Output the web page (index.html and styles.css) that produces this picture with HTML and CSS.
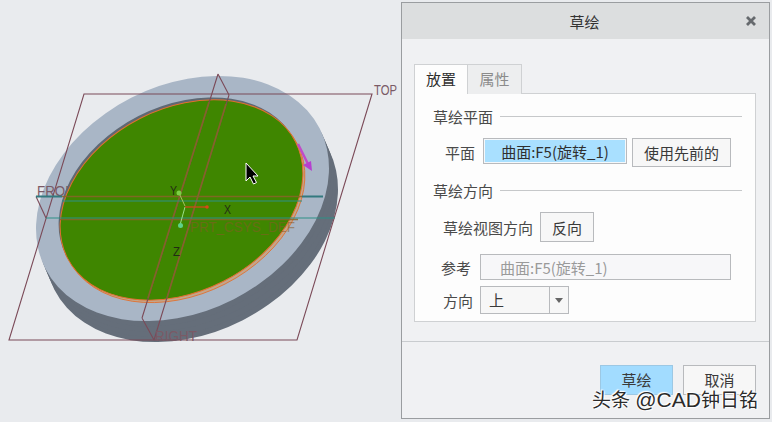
FILE: index.html
```html
<!DOCTYPE html>
<html lang="zh">
<head>
<meta charset="utf-8">
<title>草绘</title>
<link rel="stylesheet" href="styles.css">
</head>
<body>
<main class="screen">
  <svg class="viewport" width="400" height="422" viewBox="0 0 400 422">
    <defs>
      <ellipse id="disc" cx="182.500" cy="198.500" rx="154" ry="113" transform="rotate(-27 182.500 198.500)"/>
      <ellipse id="top-face" cx="181.500" cy="200" rx="128" ry="91.500" transform="rotate(-27 181.500 200)"/>
    </defs>
    <g class="part">
      <use href="#disc" class="side" transform="translate(9 21)"/>
      <use href="#disc" class="side" transform="translate(6.750 15.750)"/>
      <use href="#disc" class="side" transform="translate(4.500 10.500)"/>
      <use href="#disc" class="side" transform="translate(2.250 5.250)"/>
      <use href="#disc" class="ring"/>
    </g>
    <text class="label" x="37" y="196" textLength="46" lengthAdjust="spacingAndGlyphs">FRONT</text>
    <g class="part">
      <use href="#top-face" class="recess" transform="translate(-1.500 -2.500)"/>
      <use href="#top-face" class="lip" transform="translate(2 2.500)"/>
      <use href="#top-face" class="face"/>
    </g>
    <g class="datum">
      <path d="M84 94H372L297 340H9Z"/>
      <path d="M218 74L142 318M229 95L154 340M218 74L229 95M142 318L154 340"/>
      <path d="M36 196.500L46 218"/>
    </g>
    <g class="on-face">
      <path d="M209 102L148 298M226 104L167 298M62 196.500H302M60 219.500H298"/>
    </g>
    <g class="teal">
      <path class="thin" d="M62 201H302M46 218H335"/>
      <path d="M36 196.500H62M302 196.500H323"/>
    </g>
    <path class="arrow-line" d="M298 144L309 166"/>
    <path class="arrow-head" d="M303 165L311 161L312 171Z"/>
    <g class="csys">
      <path class="axis-y" d="M185 206L179 193"/>
      <path class="axis-z" d="M185 207L180 225"/>
      <path class="axis-x" d="M185 207H207"/>
      <circle class="dot-y" cx="179" cy="193" r="2.500"/>
      <circle class="dot-z" cx="180.500" cy="225.500" r="2.500"/>
      <circle class="dot-x" cx="207" cy="207" r="1.800"/>
    </g>
    <text class="label" x="374" y="95" textLength="23" lengthAdjust="spacingAndGlyphs">TOP</text>
    <text class="label" x="155" y="341" textLength="42" lengthAdjust="spacingAndGlyphs">RIGHT</text>
    <text class="label faint" x="190" y="232" textLength="105" lengthAdjust="spacingAndGlyphs">PRT_CSYS_DEF</text>
    <text class="axis-label" x="170" y="195" textLength="7" lengthAdjust="spacingAndGlyphs">Y</text>
    <text class="axis-label" x="224" y="214" textLength="7" lengthAdjust="spacingAndGlyphs">X</text>
    <text class="axis-label" x="173" y="256" textLength="7" lengthAdjust="spacingAndGlyphs">Z</text>
    <path class="cursor" d="M246 163V181L250 177L253.500 184L256.500 182.500L253 176H258Z"/>
  </svg>

  <section class="dialog">
    <header class="titlebar">
      <h1 class="title">草绘</h1>
      <svg class="close" width="10" height="10" viewBox="0 0 10 10"><path d="M1 1L9 9M9 1L1 9"/></svg>
    </header>
    <div class="body">
      <div class="tabs">
        <div class="tab active">放置</div>
        <div class="tab">属性</div>
      </div>
      <div class="panel">
        <div class="legend"><span>草绘平面</span><i class="rule"></i></div>
        <div class="row row-plane">
          <span class="lbl">平面</span>
          <div class="field selected">曲面:F5(旋转_1)</div>
          <button class="btn btn-prev">使用先前的</button>
        </div>
        <div class="legend legend-dir"><span>草绘方向</span><i class="rule"></i></div>
        <div class="row row-view">
          <span class="lbl">草绘视图方向</span>
          <button class="btn btn-flip">反向</button>
        </div>
        <div class="row row-ref">
          <span class="lbl">参考</span>
          <div class="field disabled">曲面:F5(旋转_1)</div>
        </div>
        <div class="row row-orient">
          <span class="lbl">方向</span>
          <div class="select"><span class="value">上</span><span class="drop"><b class="caret"></b></span></div>
        </div>
      </div>
    </div>
    <footer class="footer">
      <button class="btn action primary">草绘</button>
      <button class="btn action">取消</button>
    </footer>
  </section>
  <div class="watermark">头条 <span class="wm-latin">@CAD</span>钟日铭</div>
</main>
</body>
</html>
```

FILE: styles.css
```css
* { box-sizing: border-box; }
html, body { margin: 0; padding: 0; }
body {
  width: 772px;
  height: 422px;
  overflow: hidden;
  background: #e9ebee;
  font-family: "Noto Sans CJK SC", "Liberation Sans", sans-serif;
  font-size: 15px;
  color: #3c3c3c;
}
.screen { position: relative; display: flex; width: 772px; height: 422px; }
.viewport { flex: none; display: block; width: 400px; height: 422px; overflow: visible; }

.side { fill: #656e7a; }
.ring { fill: #a9b6c6; }
.recess { fill: #5e6874; }
.lip { fill: #c4a58a; stroke: #e2702e; stroke-width: .8; }
.face { fill: #3f8600; stroke: #e2702e; stroke-width: 1; }
.datum path { fill: none; stroke: #7b4a58; stroke-width: 1.100; }
.on-face path { fill: none; stroke: #8a6428; stroke-width: 1.700; opacity: .85; }
.teal path { fill: none; stroke: #33797e; stroke-width: 1.800; }
.teal .thin { stroke: #2f8f86; stroke-width: 1.100; }
.arrow-line { stroke: #c14bc8; stroke-width: 2.500; fill: none; }
.arrow-head { fill: #b63fd0; }
.axis-y { stroke: #a6c060; fill: none; }
.axis-z { stroke: #9be08a; fill: none; }
.axis-x { stroke: #d8481a; stroke-width: 1.200; fill: none; }
.dot-y { fill: #7ccf46; }
.dot-z { fill: #5fd08a; }
.dot-x { fill: #d8481a; }
.label {
  font-family: "Liberation Sans", sans-serif;
  font-size: 15px;
  font-weight: 400;
  fill: #7a5a66;
}
.label.faint { fill: #8a5a28; opacity: .55; }
.axis-label { font-family: "Liberation Sans", sans-serif; font-size: 13px; fill: #232d14; }
.cursor { fill: #000; stroke: #fff; stroke-width: 1; }

.dialog {
  position: relative;
  flex: none;
  display: flex;
  flex-direction: column;
  width: 369px;
  height: 417px;
  margin: 2px 0 0 1px;
  background: #f0f1f3;
  border: 1px solid #9a9da0;
}
.titlebar {
  position: relative;
  flex: none;
  display: flex;
  align-items: center;
  justify-content: center;
  height: 36px;
  background: #dcdedf;
}
.title { margin: 0; font-size: 15px; font-weight: 400; color: #333; transform: translateX(-1px); }
.close { position: absolute; right: 13px; top: 13px; }
.close path { fill: none; stroke: #666a6e; stroke-width: 2.800; }

.body { flex: none; height: 303px; padding: 25px 13px 0 12px; border-bottom: 1px solid #c9cccf; }
.tabs { display: flex; height: 29px; }
.tab {
  width: 55px;
  height: 30px;
  padding-top: 3px;
  text-align: center;
  color: #8b8b8b;
  background: #edeeef;
  border: 1px solid #cfd1d3;
  border-bottom: 0;
}
.tab.active {
  position: relative;
  z-index: 1;
  width: 53px;
  color: #2e2e2e;
  background: #fdfdfd;
  border-right: 0;
}
.panel {
  height: 229px;
  padding: 10px 13px 0 18px;
  background: #fdfdfd;
  border: 1px solid #cfd1d3;
}
.legend { display: flex; align-items: center; gap: 7px; height: 25px; color: #4a4a4a; }
.legend-dir { margin-top: 11px; }
.rule { flex: 1; height: 1px; background: #c6c8ca; }
.row { display: flex; align-items: center; color: #4a4a4a; }
.row-plane { height: 29px; margin-top: 9px; padding-left: 12px; }
.row-plane .lbl { width: 38px; }
.row-view { height: 30px; margin-top: 9px; padding-left: 10px; }
.row-view .lbl { width: 97px; }
.row-ref { height: 26px; margin-top: 12px; padding-left: 8px; }
.row-ref .lbl { width: 39px; }
.row-orient { height: 28px; margin-top: 6px; padding-left: 10px; }
.row-orient .lbl { width: 37px; }

.field { display: flex; align-items: center; height: 26px; border: 1px solid #b8babd; }
.field.selected {
  justify-content: center;
  width: 144px;
  margin-top: -3px;
  color: #2f2f2f;
  background: #a9e0ff;
  box-shadow: inset 0 0 0 1px #f4f8fb;
}
.field.disabled { width: 251px; padding-left: 19px; color: #9a9a9a; background: #f7f7f9; }
.btn {
  font: inherit;
  color: #3a3a3a;
  background: #f7f7f7;
  border: 1px solid #b8babd;
  padding: 0;
}
.btn-prev { width: 99px; height: 29px; margin-left: 5px; }
.btn-flip { width: 54px; height: 30px; }

.select { display: flex; width: 89px; height: 28px; background: #f7f7f7; border: 1px solid #b8babd; }
.value { flex: 1; padding-left: 8px; line-height: 26px; color: #3a3a3a; }
.drop { display: flex; align-items: center; justify-content: center; width: 19px; border-left: 1px solid #b8babd; }
.caret { width: 0; height: 0; border: 4px solid transparent; border-top: 5px solid #666; border-bottom: 0; }

.footer { display: flex; gap: 10px; padding: 23px 13px 0 198px; }
.action { width: 73px; height: 30px; line-height: 16px; padding-bottom: 1px; }
.primary { background: #a2dcff; border-color: #9cc8e4; }

.watermark {
  position: absolute;
  left: 592px;
  top: 390px;
  font-family: "Liberation Sans", "Noto Sans CJK SC", sans-serif;
  font-size: 19px;
  line-height: 20px;
  white-space: nowrap;
  color: #2b2b2b;
  text-shadow: 0 0 2px #fff, 0 0 2px #fff, 1px 1px 1px #fff, -1px -1px 1px #fff;
}
.wm-latin { font-size: 21px; }
```
